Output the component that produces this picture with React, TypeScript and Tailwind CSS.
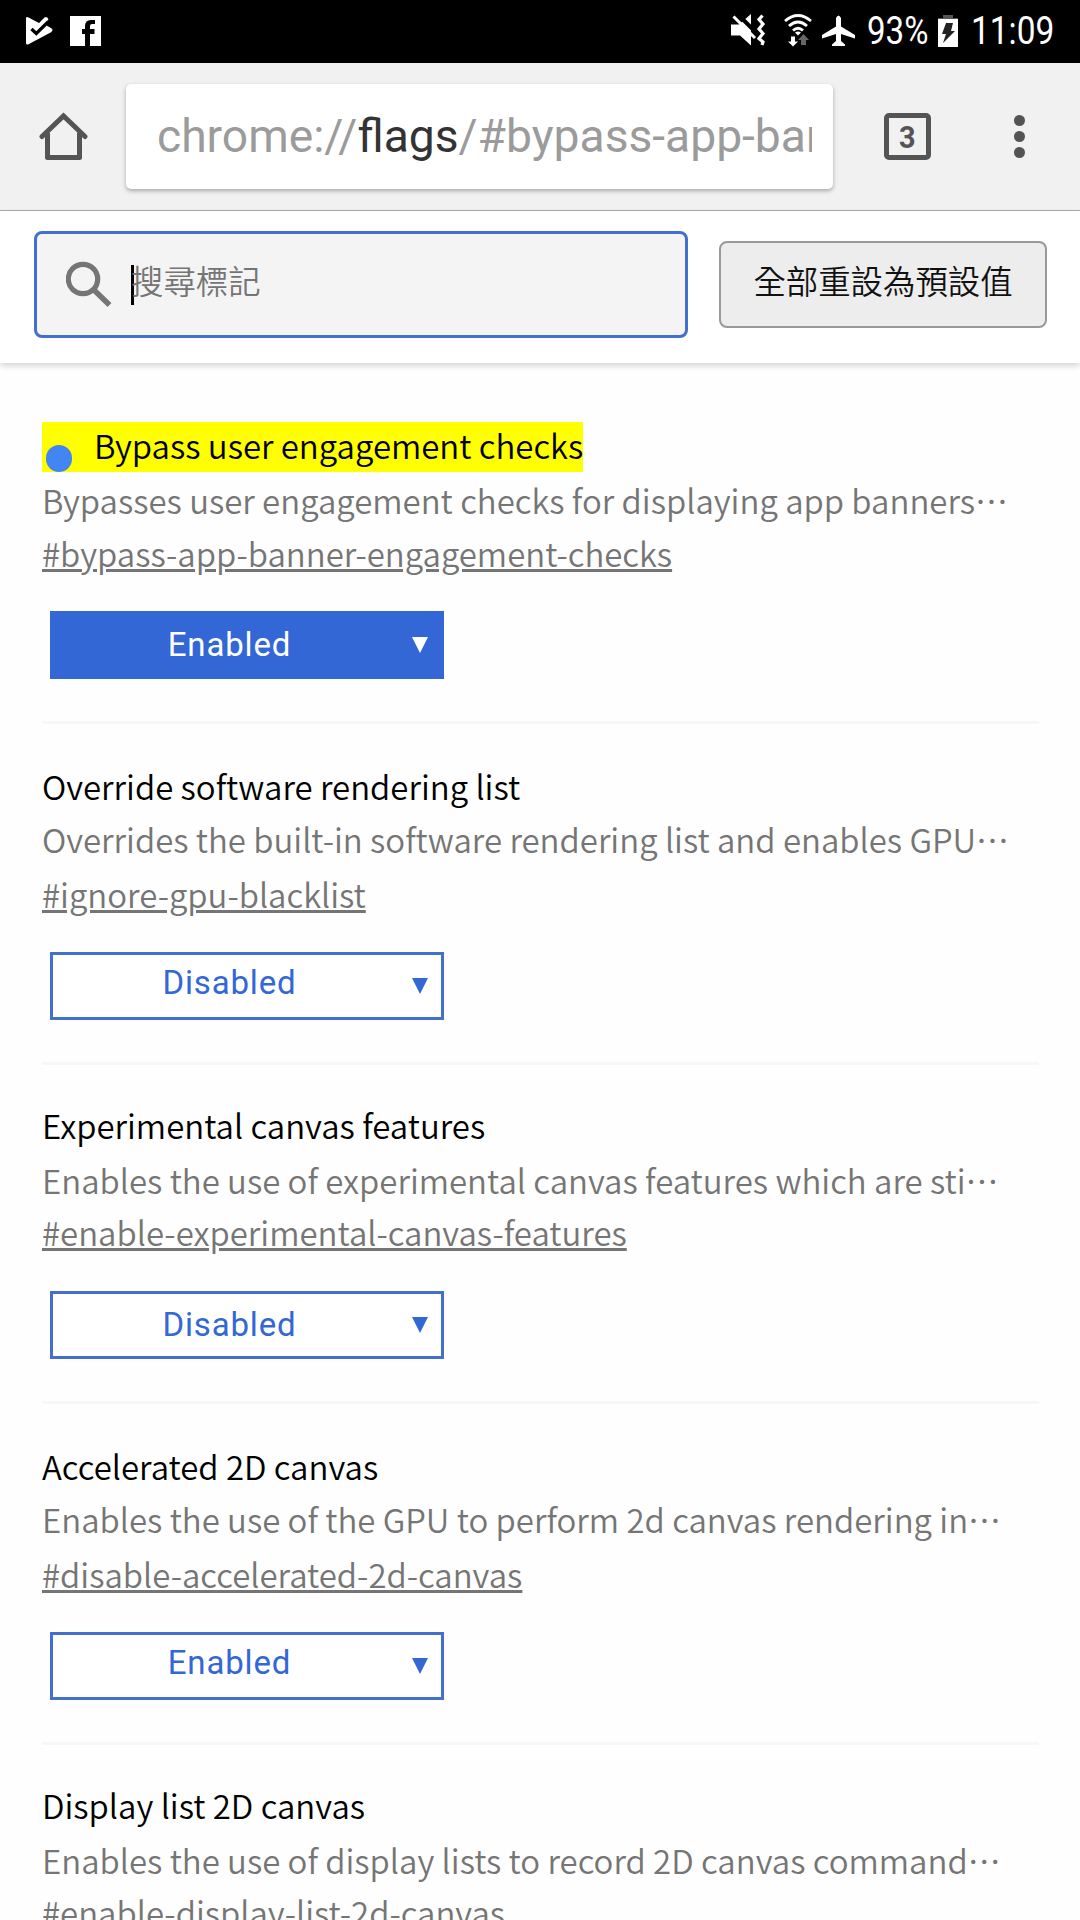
type Flag = {
  title: string;
  description: string;
  anchor: string;
  value: string;
  highlighted?: boolean;
  // Vertical rhythm: the rows alternate by a pixel or two from entry to entry.
  height: string;
  titleGap: string;
  descriptionGap: string;
  anchorGap: string;
  selectGap: string;
  valueLift: string;
};

const flags: Flag[] = [
  {
    title: 'Bypass user engagement checks',
    description: 'Bypasses user engagement checks for displaying app banners',
    anchor: '#bypass-app-banner-engagement-checks',
    value: 'Enabled',
    highlighted: true,
    height: 'h-[341px]',
    titleGap: 'mt-[39px]',
    descriptionGap: 'mt-[5px]',
    anchorGap: 'mt-[3px]',
    selectGap: 'mt-[31px]',
    valueLift: 'mb-0',
  },
  {
    title: 'Override software rendering list',
    description: 'Overrides the built-in software rendering list and enables GPU',
    anchor: '#ignore-gpu-blacklist',
    value: 'Disabled',
    height: 'h-[341px]',
    titleGap: 'mt-[39px]',
    descriptionGap: 'mt-[3px]',
    anchorGap: 'mt-[5px]',
    selectGap: 'mt-[31px]',
    valueLift: 'mb-1.5',
  },
  {
    title: 'Experimental canvas features',
    description: 'Enables the use of experimental canvas features which are sti',
    anchor: '#enable-experimental-canvas-features',
    value: 'Disabled',
    height: 'h-[339px]',
    titleGap: 'mt-[37px]',
    descriptionGap: 'mt-[5px]',
    anchorGap: 'mt-[2px]',
    selectGap: 'mt-[32px]',
    valueLift: 'mb-0',
  },
  {
    title: 'Accelerated 2D canvas',
    description: 'Enables the use of the GPU to perform 2d canvas rendering in',
    anchor: '#disable-accelerated-2d-canvas',
    value: 'Enabled',
    height: 'h-[341px]',
    titleGap: 'mt-[39px]',
    descriptionGap: 'mt-[3px]',
    anchorGap: 'mt-[5px]',
    selectGap: 'mt-[31px]',
    valueLift: 'mb-1.5',
  },
  {
    title: 'Display list 2D canvas',
    description: 'Enables the use of display lists to record 2D canvas command',
    anchor: '#enable-display-list-2d-canvas',
    value: 'Enabled',
    height: 'h-[339px]',
    titleGap: 'mt-[37px]',
    descriptionGap: 'mt-[5px]',
    anchorGap: 'mt-[2px]',
    selectGap: 'mt-[32px]',
    valueLift: 'mb-0',
  },
];

function StatusBar() {
  return (
    <header className="flex h-[63px] shrink-0 items-center bg-black pl-[25px] pr-[24px] font-['Roboto',sans-serif] text-white">
      <svg className="-mt-px h-[30px] w-[30px]" viewBox="0 0 30 30">
        <path d="M1 2.500Q1 .5 3 1.200L14 7 19.500 1.500Q21 .3 22.500 1.800T23 4.500L21.500 9.500 26 12Q29 14 26 16.200L4 28Q1 29.500 1 27z" fill="#fff" />
        <path d="M6.500 13L11.300 17.500 23.500 5.500" fill="none" stroke="#000" strokeWidth="3.200" />
      </svg>
      <svg className="-mt-0.5 ml-[15px] h-[30px] w-[31px]" viewBox="0 0 31 30">
        <path d="M0 0h31v30H20V18h4.500v-5H20v-3q0-2 2-2h3V4h-4q-6 0-6 6v3h-3v5h3v12H0z" fill="#fff" />
      </svg>
      <div className="ml-auto flex items-center">
        <svg className="-mt-0.5 h-[34px] w-[36px]" viewBox="0 0 36 34">
          <path d="M0 10.500h8L20 0v31.500L9 21.500H0z" fill="#fff" />
          <path d="M5 -1.500L27 20.500" stroke="#000" strokeWidth="4" />
          <path d="M2.500 2.500L24 24" stroke="#fff" strokeWidth="3" />
          <path d="M31.500 1.500l-3.500 4 4 4.500-4 5 4 4.500-4 5 4 3.500-1 3" fill="none" stroke="#fff" strokeWidth="3.200" />
        </svg>
        <svg className="-mt-0.5 ml-[17px] h-[34px] w-[28px]" viewBox="0 0 28 34">
          <g fill="none" stroke="#fff" strokeWidth="2.800">
            <path d="M1 7q13-11 26 0" />
            <path d="M5 12q9-8 18 0" />
            <path d="M9 16.500q5-4.500 10 0" />
          </g>
          <path d="M11 18.500q3-2 6 0l-3 3z" fill="#fff" />
          <path d="M7 22.500h4v5h3l-5 5-5-5h3z" fill="#fff" />
          <path d="M17 31h5v-5h3L19.500 20 14 26h3z" fill="#666" />
        </svg>
        <svg className="-mt-0.5 ml-[10px] h-[32px] w-[33px]" viewBox="0 0 33 32">
          <path d="M14 3q2.500-5 5 0v8.500L33 20v3.500L19 19v7l4 3.500V31H10v-1.500L14 26v-7L0 23.500V20l14-8.500z" fill="#fff" />
        </svg>
        <span className="-mt-0.5 ml-[12px] w-[69px] origin-left scale-x-[0.87] text-[38px] leading-none whitespace-nowrap">93%</span>
        <svg className="-mt-px ml-[2px] h-[32px] w-[20px]" viewBox="0 0 20 32">
          <path d="M5 0h10v3h5v3H0V3h5z" fill="#555" />
          <path d="M0 4h20v28H0z" fill="#fff" />
          <path d="M8 8h7l-2 8h4L5 28l3-9H4z" fill="#222" />
        </svg>
        <span className="-mt-0.5 ml-[13px] w-[85px] origin-left scale-x-[0.88] text-[38px] leading-none whitespace-nowrap">11:09</span>
      </div>
    </header>
  );
}

function BrowserBar() {
  return (
    <div className="flex h-[148px] shrink-0 items-center border-b border-[#a9a9a9] bg-[#f1f1f1] font-['Roboto',sans-serif]">
      <svg className="ml-[39px] h-[50px] w-[49px]" viewBox="0 0 49 50" fill="none" stroke="#545454" strokeWidth="5">
        <path d="M3 24.500L24.500 4 46 24.500" strokeLinecap="round" strokeWidth="5" />
        <path d="M8.500 21v24.500h32V21" strokeLinejoin="round" />
      </svg>
      <div className="ml-[38px] flex h-[105px] w-[707px] items-center rounded-[5px] bg-white pb-0.5 pl-[31px] pr-[21px] shadow-[0_2px_4px_rgba(0,0,0,0.3)]">
        <div className="w-full overflow-hidden text-[46.200px] leading-[60px] whitespace-nowrap text-[#9b9b9b]">
          chrome://<span className="text-[#333]">flags</span>/#bypass-app-ban
        </div>
      </div>
      <div className="ml-[51px] flex size-[47px] items-center justify-center rounded-[5px] border-[5px] border-[#545454] text-[32px] leading-none font-bold text-[#545454]">
        <span className="scale-x-[0.9]">3</span>
      </div>
      <div className="ml-[83px] flex flex-col gap-[5px]">
        <span className="size-[11px] rounded-full bg-[#545454]" />
        <span className="size-[11px] rounded-full bg-[#545454]" />
        <span className="size-[11px] rounded-full bg-[#545454]" />
      </div>
    </div>
  );
}

function SearchHeader() {
  return (
    <div className="flex h-[152px] shrink-0 items-start bg-white pt-5 pl-[34px] shadow-[0_3px_6px_rgba(0,0,0,0.16)]">
      <div className="flex h-[107px] w-[654px] items-center rounded-[8px] border-[3px] border-[#4370cd] bg-[#f4f4f4] pl-[29px]">
        <svg className="h-[47px] w-[47px]" viewBox="0 0 47 47" fill="none" stroke="#757575">
          <circle cx="17" cy="18" r="14.700" strokeWidth="5.200" />
          <path d="M28 29l15.500 15" strokeWidth="5.500" />
        </svg>
        <span className="ml-[18px] h-[40px] w-[3px] bg-black" />
        <span className="-ml-[3px] pb-2.5 font-[350] text-[32.400px] leading-[40px] text-[#757575]">搜尋標記</span>
      </div>
      <button className="mt-[10px] ml-[31px] flex h-[87px] w-[328px] items-center justify-center rounded-[8px] border-2 border-[#999] bg-[#ededed] pb-2 font-[350] text-[32.400px] leading-none text-[#111]">
        全部重設為預設值
      </button>
    </div>
  );
}

function FlagEntry({ flag }: { flag: Flag }) {
  return (
    <section className={`flex shrink-0 flex-col items-start border-b-[3px] border-[#f7f7f7] text-[32.950px] leading-[46px] whitespace-nowrap font-[350] ${flag.height}`}>
      <h2 className={`flex h-[50px] items-start text-black ${flag.titleGap} ${flag.highlighted ? 'bg-[#ff0]' : ''}`}>
        {flag.highlighted && <span className="mt-[23px] mr-[22px] ml-[4px] h-[27px] w-[26px] rounded-full bg-[#4285f4]" />}
        {flag.title}
      </h2>
      <p className={`h-[50px] text-[#757575] ${flag.descriptionGap}`}>{flag.description}…</p>
      <a className={`h-[50px] text-[#757575] underline ${flag.anchorGap}`}>{flag.anchor}</a>
      <div
        className={`ml-[7.500px] flex h-[68px] w-[394px] shrink-0 items-center border-[3px] pr-[13px] font-['Roboto',sans-serif] font-normal ${flag.selectGap} ${
          flag.highlighted ? 'border-[#3367d6] bg-[#3367d6] text-white' : 'border-[#4370cd] bg-white text-[#3367d6]'
        }`}
      >
        <span className={`w-[354px] text-center text-[33px] leading-[40px] tracking-[0.85px] ${flag.valueLift}`}>{flag.value}</span>
        <svg className="ml-auto h-4 w-4 shrink-0" viewBox="0 0 16 16">
          <path d="M0 0h16L8 16z" fill="currentColor" />
        </svg>
      </div>
    </section>
  );
}

export default function App() {
  return (
    <main className="flex h-[1920px] w-[1080px] flex-col overflow-hidden bg-[#fefefe] font-['Noto_Sans_CJK_TC',sans-serif]" lang="zh-Hant">
      <StatusBar />
      <BrowserBar />
      <SearchHeader />
      <div className="mt-[20px] flex flex-col pr-[41px] pl-[42px]">
        {flags.map((flag) => (
          <FlagEntry key={flag.anchor} flag={flag} />
        ))}
      </div>
    </main>
  );
}
